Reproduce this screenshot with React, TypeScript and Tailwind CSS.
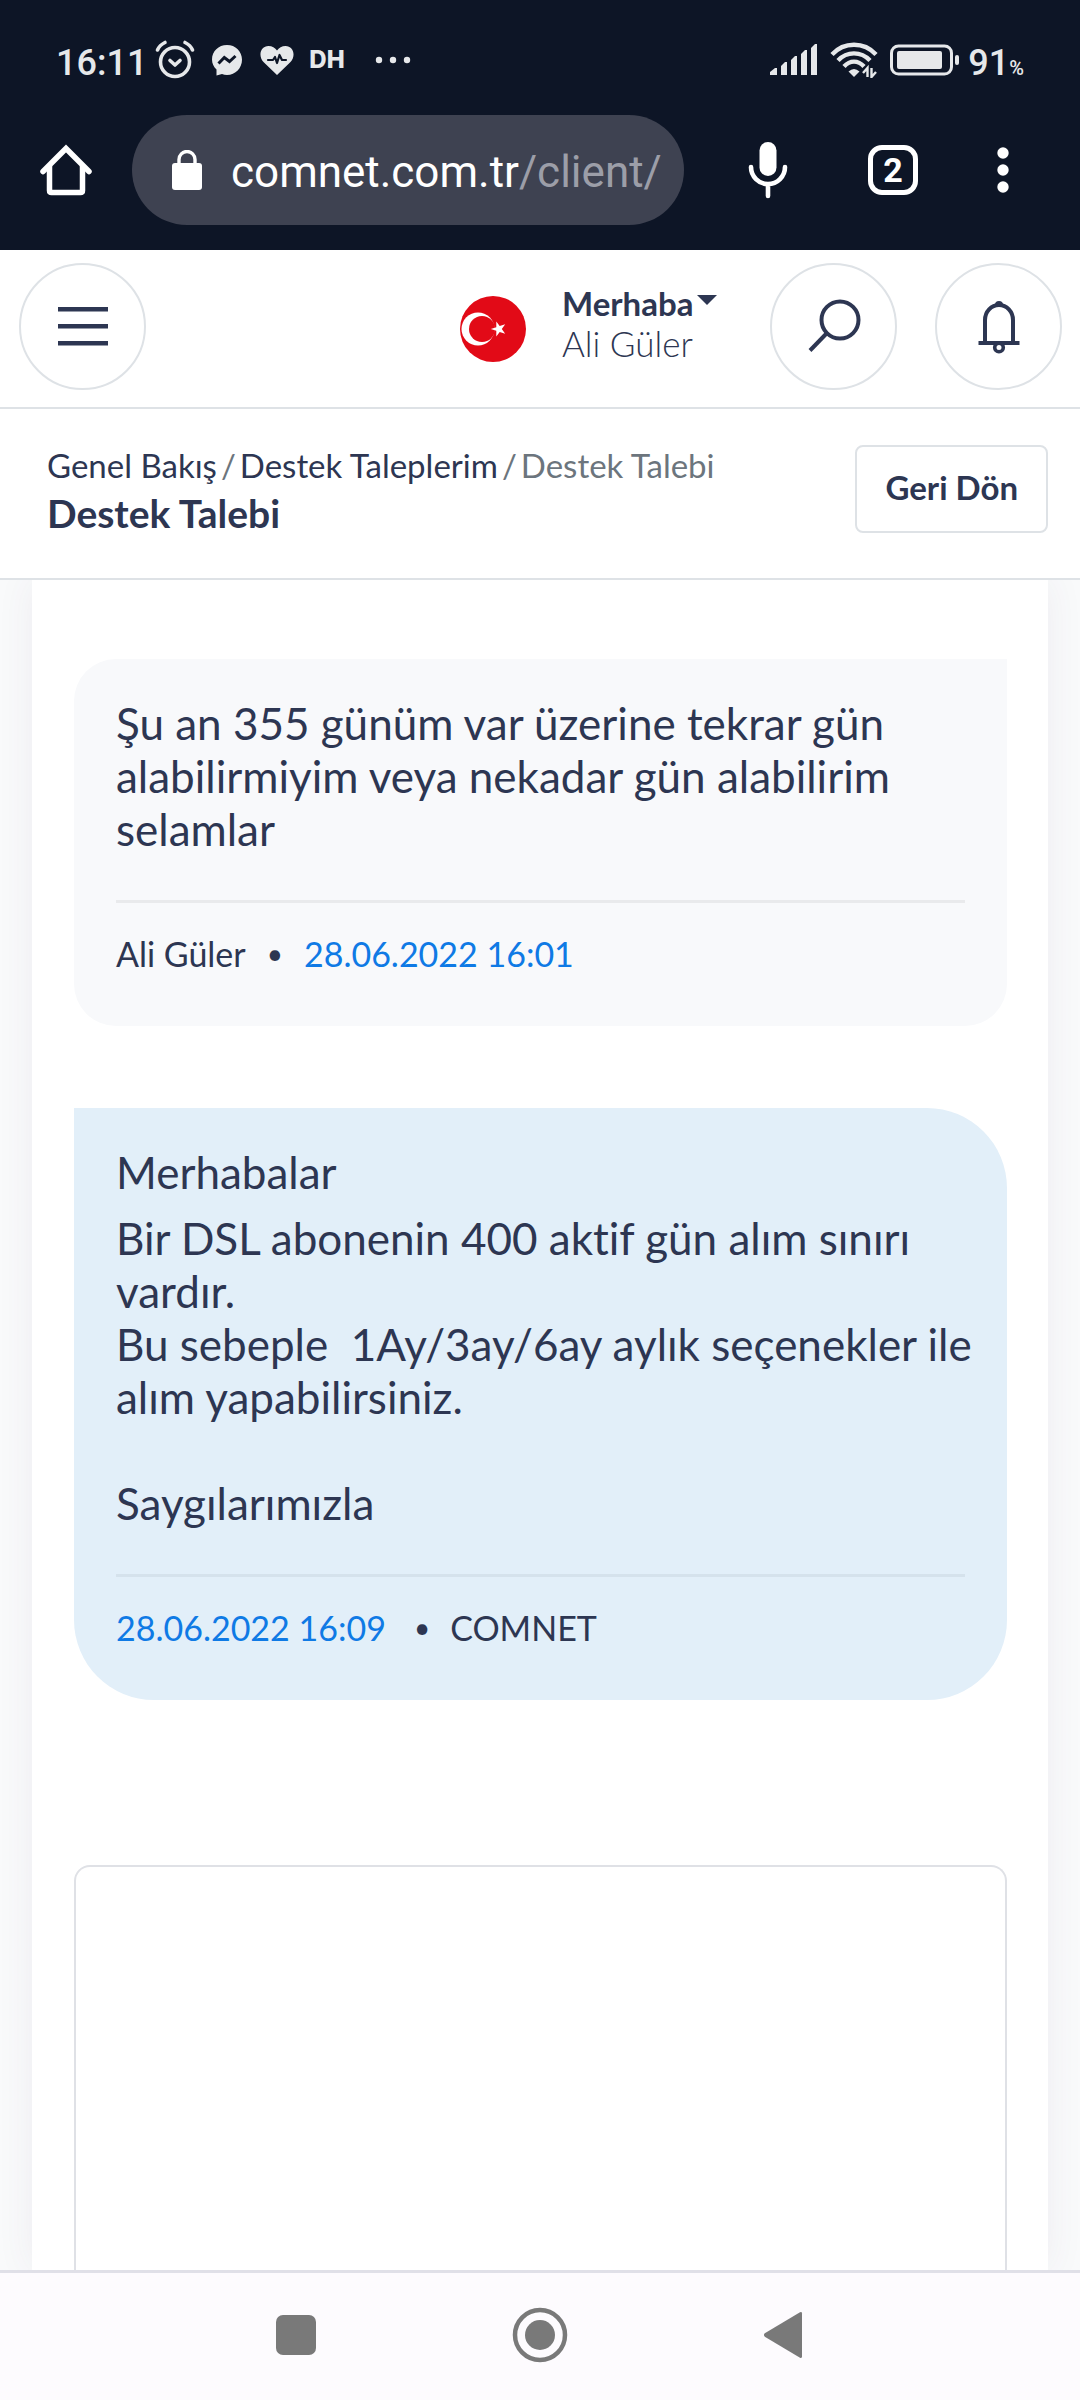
import type { ReactNode } from "react";

const StatusBar = () => {
  return (
    <div className="flex h-[115px] items-center justify-between pl-14 pr-14 pt-1 text-[#e6e8ea]">
      <div className="flex items-center">
        <span className="mt-1.5 text-[36px] font-medium leading-none">16:11</span>
        {/* Alarm */}
        <svg className="ml-2 h-10 w-10" viewBox="0 0 40 40" fill="none" stroke="currentColor" strokeLinecap="round">
          <circle cx="20" cy="22" r="14.5" strokeWidth="3.6" />
          <path d="M2.5 10C4 6.5 7 4 10 2.5M37.5 10C36 6.5 33 4 30 2.5" strokeWidth="3.6" />
          <path d="M15 20.5L20 25L25 20.5" strokeWidth="3.6" strokeLinejoin="round" />
        </svg>
        {/* Messenger */}
        <svg className="ml-4 h-8 w-8" viewBox="0 0 32 32">
          <path d="M16 1C7.5 1 1 7.3 1 15.5C1 19.5 2.8 23 5.5 25.5V31.5L11 30C12.5 30.5 14.2 31 16 31C24.5 31 31 24 31 15.8C31 7.3 24.5 1 16 1Z" fill="currentColor" />
          <path d="M7.5 19.5L13.3 13.5L18.5 17.5L24.5 12" fill="none" stroke="#0d1526" strokeWidth="3" />
        </svg>
        {/* Heart rate */}
        <svg className="ml-4 h-8 w-9" viewBox="0 0 36 32">
          <path d="M18 31L5 18.5C-1.5 12 1.5 2 9.5 2C13 2 16.2 3.8 18 6.5C19.8 3.8 23 2 26.5 2C34.5 2 37.5 12 31 18.5Z" fill="currentColor" />
          <path d="M9 16H14L16 13L18 19L20.5 11L23 16H27" fill="none" stroke="#0d1526" strokeWidth="2.2" strokeLinecap="round" strokeLinejoin="round" />
        </svg>
        <span className="ml-[14px] font-[Inter,sans-serif] text-2xl font-extrabold leading-none">DH</span>
        <svg className="ml-[30px] h-2 w-9" viewBox="0 0 36 8" fill="currentColor">
          <circle cx="4" cy="4" r="3.2" />
          <circle cx="18" cy="4" r="3.2" />
          <circle cx="32" cy="4" r="3.2" />
        </svg>
      </div>

      <div className="flex items-center">
        {/* Signal */}
        <svg className="h-8 w-12" viewBox="0 0 48 32" fill="currentColor">
          <path d="M0 28L5 24H7V31H0ZM11 22L15 18H17V31H11ZM21 16L25 12H27V31H21ZM31 10L35 6H37V31H31ZM41 4L45 0H47V31H41Z" />
        </svg>
        {/* Wi-Fi */}
        <svg className="ml-3 h-9 w-12" viewBox="0 0 48 36">
          <g fill="none" stroke="currentColor" strokeWidth="4.4">
            <path d="M2 12.5C14 -.5 34 -.5 46 12.5" />
            <path d="M8 18.5C17 9 31 9 40 18.5" />
            <path d="M14 24.5C20 18 28 18 34 24.5" />
          </g>
          <path d="M18.5 29.5Q24 24.5 29.5 29.5L24 35Z" fill="currentColor" />
          <path d="M37.5 35V26L33 31M41.5 26V35L46 30" fill="none" stroke="currentColor" strokeWidth="2.4" />
        </svg>
        {/* Battery */}
        <svg className="ml-3 h-8 w-[70px]" viewBox="0 0 70 32">
          <rect x="1.5" y="2" width="60" height="28" rx="7" fill="none" stroke="currentColor" strokeWidth="3" />
          <rect x="7" y="7" width="45" height="18" rx="2" fill="currentColor" />
          <rect x="65" y="11" width="4" height="10" rx="2" fill="currentColor" />
        </svg>
        <span className="ml-2 mt-1.5 text-[36px] font-medium leading-none">
          91<span className="text-[20px]">%</span>
        </span>
      </div>
    </div>
  );
};

const BrowserBar = () => {
  return (
    <div className="flex h-[110px] items-center text-white">
      <button type="button" aria-label="Home" className="ml-10 shrink-0">
        <svg className="h-[52px] w-[52px]" viewBox="0 0 52 52" fill="none" stroke="currentColor" strokeWidth="5.5">
          <path d="M9.5 22V46.5Q9.5 48.5 11.5 48.5H40.5Q42.5 48.5 42.5 46.5V22" />
          <path d="M3 27.5L26 4.5L49 27.5" strokeLinecap="round" />
        </svg>
      </button>
      <div className="ml-10 flex h-full min-w-0 flex-1 items-center rounded-full bg-[#3e4251] pl-10 pr-4">
        <svg className="h-10 w-[30px] shrink-0" viewBox="0 0 30 40">
          <rect y="13" width="30" height="27" rx="3" fill="currentColor" />
          <path d="M7 14V9.5A8 8 0 0 1 23 9.5V14" fill="none" stroke="currentColor" strokeWidth="3.4" />
        </svg>
        <div className="ml-[29px] mt-1 min-w-0 flex-1 overflow-hidden whitespace-nowrap text-[44px] leading-[56px]">
          comnet.com.tr<span className="text-[#9c9ea8]">/client/</span>
        </div>
      </div>
      <div className="flex shrink-0 items-center pl-16 pr-[71px]">
        <button type="button" aria-label="Voice search">
          <svg className="h-[60px] w-10" viewBox="0 0 40 60">
            <rect x="11.5" y="2" width="17" height="34" rx="8.5" fill="currentColor" />
            <path d="M3 27A17 17 0 0 0 37 27M20 44V56" fill="none" stroke="currentColor" strokeWidth="4.6" strokeLinecap="round" />
          </svg>
        </button>
        <button
          type="button"
          aria-label="Tabs"
          className="ml-20 flex h-[50px] w-[50px] items-center justify-center rounded-[14px] border-[5px] border-white text-[34px] font-bold leading-none"
        >
          2
        </button>
        <button type="button" aria-label="Menu" className="ml-[79px]">
          <svg className="h-12 w-3" viewBox="0 0 12 48" fill="currentColor">
            <circle cx="6" cy="7" r="5.7" />
            <circle cx="6" cy="24" r="5.7" />
            <circle cx="6" cy="41" r="5.7" />
          </svg>
        </button>
      </div>
    </div>
  );
};

const RoundButton = ({ label, children }: { label: string; children: ReactNode }) => {
  return (
    <button
      type="button"
      aria-label={label}
      className="flex h-[127px] w-[127px] shrink-0 items-center justify-center rounded-full border-2 border-[#dee2e6]"
    >
      {children}
    </button>
  );
};

const Header = () => {
  return (
    <header className="flex items-center border-b-2 border-[#dee2e6] pb-[17px] pl-[19px] pr-[18px] pt-[13px]">
      <RoundButton label="Menü">
        <svg className="h-10 w-[50px]" viewBox="0 0 50 40" fill="currentColor">
          <path d="M0 0H50V4.5H0ZM0 17H50V21.5H0ZM0 34H50V38.5H0Z" />
        </svg>
      </RoundButton>
      <div className="flex-1" />
      <svg className="mt-1 h-[66px] w-[66px]" viewBox="0 0 66 66">
        <circle cx="33" cy="33" r="33" fill="#e20a17" />
        <circle cx="18" cy="33" r="16.5" fill="#fff" />
        <circle cx="22" cy="33" r="13" fill="#e20a17" />
        <path d="M30.8 33L36.3 31.2V25.4L39.7 30.1L45.2 28.3L41.8 33L45.2 37.7L39.7 35.9L36.3 40.6V34.8Z" fill="#fff" />
      </svg>
      <button type="button" className="ml-9 w-[156px] pb-2 text-left">
        <span className="flex items-start text-[33px] font-bold leading-10">
          Merhaba
          <svg className="ml-1 mt-3 h-[10px] w-5 shrink-0" viewBox="0 0 20 10" fill="currentColor">
            <path d="M0 0H20L10 10Z" />
          </svg>
        </span>
        <span className="block text-[35px] font-light leading-10">Ali Güler</span>
      </button>
      <div className="ml-[52px] flex gap-[38px]">
        <RoundButton label="Ara">
          <svg className="h-14 w-14" viewBox="0 0 56 56" fill="none" stroke="currentColor" strokeWidth="4">
            <circle cx="34" cy="21" r="18.5" />
            <path d="M20.5 34.5L4 51.5" />
          </svg>
        </RoundButton>
        <RoundButton label="Bildirimler">
          <svg className="h-14 w-11" viewBox="0 0 44 56" fill="none" stroke="currentColor" strokeWidth="4">
            <path d="M8 43.5V21A14 15 0 0 1 36 21V43.5" />
            <path d="M1.5 44H42.5" />
            <circle cx="22" cy="48.5" r="4.3" strokeWidth="3.6" />
            <path d="M18 6A4 4 0 0 1 26 6Z" fill="currentColor" stroke="none" />
          </svg>
        </RoundButton>
      </div>
    </header>
  );
};

const PageTitle = () => {
  return (
    <section className="flex items-start justify-between border-b-2 border-[#dee2e6] pb-[45px] pl-[47px] pr-8 pt-9">
      <div>
        <nav className="flex gap-1 text-[33px] leading-10">
          <a href="#">Genel Bakış</a>
          <span className="text-[#6c757d]">/</span>
          <a href="#">Destek Taleplerim</a>
          <span className="text-[#6c757d]">/</span>
          <span className="text-[#6c757d]">Destek Talebi</span>
        </nav>
        <h1 className="mt-2 text-[39px] font-bold leading-10">Destek Talebi</h1>
      </div>
      <button type="button" className="h-[88px] rounded-lg border-2 border-[#dee2e6] px-7 pb-1 text-[33px] font-bold leading-10">
        Geri Dön
      </button>
    </section>
  );
};

const NavBar = () => {
  return (
    <nav className="flex h-[130px] items-center justify-center gap-[196px] border-t-[3px] border-[#e0e0e8] bg-[#fdfbfe] pb-1 text-[#797979]">
      <button type="button" aria-label="Recent apps">
        <svg className="h-10 w-10" viewBox="0 0 40 40" fill="currentColor">
          <rect width="40" height="40" rx="7" />
        </svg>
      </button>
      <button type="button" aria-label="Home screen">
        <svg className="h-14 w-14" viewBox="0 0 56 56">
          <circle cx="28" cy="28" r="25" fill="none" stroke="currentColor" strokeWidth="4.5" />
          <circle cx="28" cy="28" r="15" fill="currentColor" />
        </svg>
      </button>
      <button type="button" aria-label="Back">
        <svg className="h-12 w-10" viewBox="0 0 40 48" fill="currentColor">
          <path d="M.8 22.3L36 1.3Q38 .5 38 2.5V45.5Q38 47.5 36 46.7L.8 25.7Q-1 24 .8 22.3Z" />
        </svg>
      </button>
    </nav>
  );
};

const App = () => {
  return (
    <div className="flex min-h-screen flex-col bg-white font-[Lato,sans-serif] text-[#2d3652] [font-variant-ligatures:none]">
      {/* Phone status bar & browser toolbar */}
      <div className="bg-[#0d1526] pb-[25px] font-[Roboto,sans-serif]">
        <StatusBar />
        <BrowserBar />
      </div>

      <Header />
      <PageTitle />

      {/* Ticket messages */}
      <main className="flex flex-1 flex-col overflow-hidden bg-[#f9fafb] px-8">
        <div className="flex flex-1 flex-col bg-white pl-[42px] pr-[41px] pt-[79px] shadow-[0_0_36px_#523f6912]">
          <article className="rounded-[42px] rounded-tr-none bg-[#f8f9fb] px-[42px] pb-[46px] pt-[38px]">
            <p className="text-[44px] leading-[53px]">
              Şu an 355 günüm var üzerine tekrar gün alabilirmiyim veya nekadar gün alabilirim selamlar
            </p>
            <hr className="mt-11 border-t-[3px] border-[#e9eaec]" />
            <footer className="mt-6 flex items-center text-[34px] leading-[53px]">
              <span>Ali Güler</span>
              <span className="mx-[21px] text-[28px]">•</span>
              <time className="text-[#0f7ae5]">28.06.2022 16:01</time>
            </footer>
          </article>

          <article className="mt-[82px] rounded-[80px] rounded-tl-none bg-[#e2eff9] px-[42px] pb-[46px] pt-[38px]">
            <p className="text-[44px] leading-[53px]">Merhabalar</p>
            <p className="-mr-4 mt-[13px] whitespace-pre-wrap text-[44px] leading-[53px]">
              Bir DSL abonenin 400 aktif gün alım sınırı vardır.
              <br />
              {"Bu sebeple  1Ay/3ay/6ay aylık seçenekler ile alım yapabilirsiniz."}
              <br />
              <br />
              Saygılarımızla
            </p>
            <hr className="mt-11 border-t-[3px] border-[#d5e2ec]" />
            <footer className="mt-6 flex items-center text-[34px] leading-[53px]">
              <time className="text-[#0f7ae5]">28.06.2022 16:09</time>
              <span className="ml-7 mr-5 text-[28px]">•</span>
              <span>COMNET</span>
            </footer>
          </article>

          <textarea
            aria-label="Mesajınız"
            className="mt-[165px] min-h-80 w-full flex-1 resize-none rounded-t-2xl border-2 border-b-0 border-[#dfe1e6] bg-white p-6 text-[44px] leading-[53px] outline-none"
          />
        </div>
      </main>

      <NavBar />
    </div>
  );
};

export default App;
